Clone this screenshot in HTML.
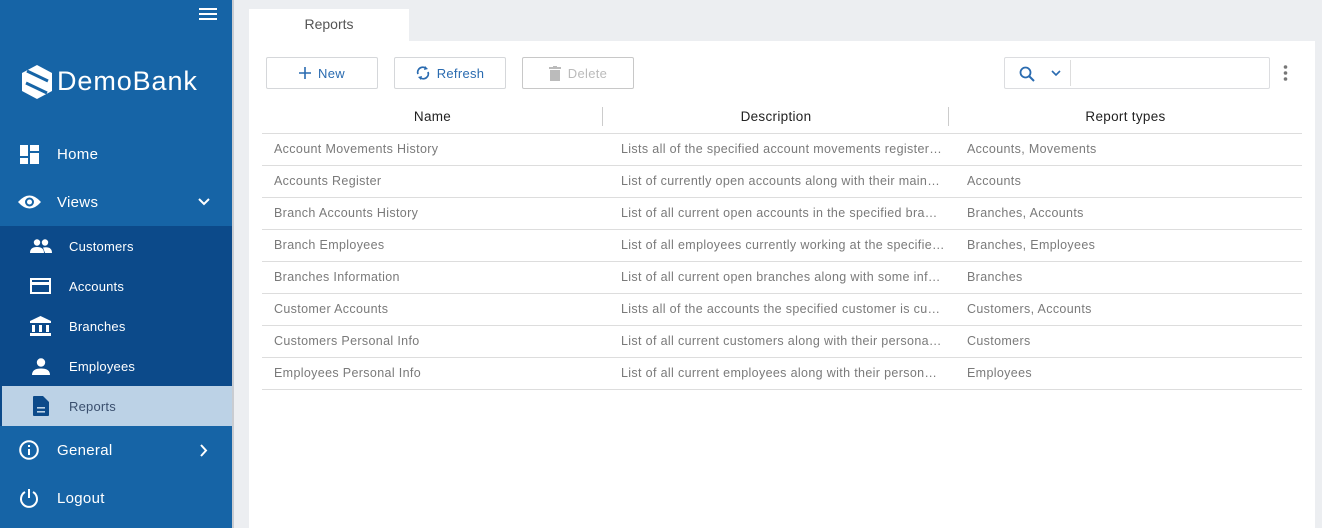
<!DOCTYPE html>
<html><head><meta charset="utf-8"><style>
*{box-sizing:border-box;margin:0;padding:0}
body{width:1322px;height:528px;overflow:hidden;background:#eceef1;font-family:"Liberation Sans",sans-serif;position:relative}
.sb{position:absolute;left:0;top:0;width:232px;height:528px;background:#1664a6;color:#fff}
.sbline{position:absolute;left:232px;top:0;width:2px;height:528px;background:#c9ccd1}
.it{position:absolute;left:0;width:232px;height:40px;display:flex;align-items:center;font-size:15px;letter-spacing:.3px}
.it svg{position:absolute}
.it span{position:absolute;left:57px}
.sub{position:absolute;left:0;top:226px;width:232px;height:200px;background:#0c4a8a}
.si{position:absolute;left:0;width:232px;height:40px;display:flex;align-items:center;font-size:13px;letter-spacing:.2px}
.si span{position:absolute;left:69px}
.si svg{position:absolute;left:30px}
.panel{position:absolute;left:249px;top:41px;width:1066px;height:487px;background:#fff}
.tab{position:absolute;left:249px;top:9px;width:160px;height:32px;background:#fff;font-size:14px;color:#555;text-align:center;line-height:31px}
.btn{position:absolute;top:57px;height:32px;width:112px;border:1px solid #d5d7da;border-radius:2px;font-size:13px;color:#2a6bb0;display:flex;align-items:center;justify-content:center;gap:7px;background:#fff;letter-spacing:.3px}
table{position:absolute;left:262px;top:100px;width:1040px;border-collapse:collapse;font-size:12.5px}
th{height:33px;font-weight:normal;color:#222;font-size:13.5px;text-align:center;position:relative;border-bottom:1px solid #ddd;letter-spacing:.3px}
td{height:32px;color:#7a7a7a;border-bottom:1px solid #ddd;padding-left:12px;white-space:nowrap;overflow:hidden;letter-spacing:.35px}
td:nth-child(2){padding-left:18px}td:nth-child(3){padding-left:18px}
.sep{position:absolute;top:7px;width:1px;height:19px;background:#ccc}
</style></head><body>
<div class="sb">
 <svg style="position:absolute;left:199px;top:8px" width="18" height="13"><rect y="0" width="18" height="2" fill="#fff"/><rect y="5" width="18" height="2" fill="#fff"/><rect y="10" width="18" height="2" fill="#fff"/></svg>
 <svg style="position:absolute;left:21px;top:64px" width="32" height="36" viewBox="0 0 32 36"><path d="M16 1 L31 9 L31 27 L16 35 L1 27 L1 9Z" fill="#fff"/><path d="M6 7 L27 17 M5 19 L26 29" stroke="#1664a6" stroke-width="3"/></svg>
 <div style="position:absolute;left:57px;top:66px;font-size:27px;letter-spacing:.9px">DemoBank</div>
 <div class="it" style="top:134px"><svg style="left:20px" width="19" height="19"><rect x="0" y="0" width="8" height="11" fill="#fff"/><rect x="10" y="0" width="9" height="6" fill="#fff"/><rect x="10" y="8" width="9" height="11" fill="#fff"/><rect x="0" y="13" width="8" height="6" fill="#fff"/></svg><span>Home</span></div>
 <div class="it" style="top:182px"><svg style="left:18px" width="23" height="16" viewBox="0 0 23 16"><path d="M0 8 Q11.5 -5 23 8 Q11.5 21 0 8Z" fill="#fff"/><circle cx="11.5" cy="8" r="4.5" fill="#1664a6"/><circle cx="11.5" cy="8" r="2.5" fill="#fff"/></svg><span>Views</span><svg style="left:198px" width="12" height="8"><path d="M1 1 L6 6 L11 1" stroke="#fff" stroke-width="2" fill="none"/></svg></div>
 <div class="sub">
  <div class="si" style="top:0"><svg width="22" height="14" viewBox="0 0 22 14"><circle cx="7" cy="3.5" r="3.2" fill="#fff"/><circle cx="15" cy="3.5" r="3.2" fill="#fff"/><path d="M0 14 Q0 8 7 8 Q14 8 14 14Z M13 8.5 Q22 7 22 14 H15Z" fill="#fff"/></svg><span>Customers</span></div>
  <div class="si" style="top:40px"><svg width="21" height="16"><rect x="1" y="1" width="19" height="14" fill="none" stroke="#fff" stroke-width="2"/><rect x="1" y="4" width="19" height="3" fill="#fff"/></svg><span>Accounts</span></div>
  <div class="si" style="top:80px"><svg width="21" height="20"><path d="M10.5 0 L21 5 V7 H0 V5Z" fill="#fff"/><rect x="2" y="9" width="3" height="7" fill="#fff"/><rect x="9" y="9" width="3" height="7" fill="#fff"/><rect x="16" y="9" width="3" height="7" fill="#fff"/><rect x="0" y="17" width="21" height="3" fill="#fff"/></svg><span>Branches</span></div>
  <div class="si" style="top:120px"><svg width="20" height="17" style="left:31px"><circle cx="10" cy="4.5" r="4.2" fill="#fff"/><path d="M1 17 Q1 10.5 10 10.5 Q19 10.5 19 17Z" fill="#fff"/></svg><span>Employees</span></div>
  <div class="si" style="top:160px;background:#bcd2e6;color:#3a4f6e;left:2px;width:230px"><svg width="16" height="20" style="left:31px"><path d="M0 1 Q0 0 1 0 H10 L16 6 V19 Q16 20 15 20 H1 Q0 20 0 19Z" fill="#0c4a8a"/><rect x="4" y="11" width="8" height="1.6" fill="#bcd2e6"/><rect x="4" y="15" width="8" height="1.6" fill="#bcd2e6"/></svg><span style="left:67px">Reports</span></div>
 </div>
 <div class="it" style="top:430px"><svg style="left:19px" width="20" height="20"><circle cx="10" cy="10" r="8.8" stroke="#fff" stroke-width="2" fill="none"/><rect x="9" y="9" width="2" height="6" fill="#fff"/><rect x="9" y="5" width="2" height="2" fill="#fff"/></svg><span>General</span><svg style="left:200px" width="8" height="13"><path d="M1 1 L6 6.5 L1 12" stroke="#fff" stroke-width="2" fill="none"/></svg></div>
 <div class="it" style="top:478px"><svg style="left:19px" width="20" height="20"><path d="M6 4 A8 8 0 1 0 14 4" stroke="#fff" stroke-width="2" fill="none"/><rect x="9" y="1" width="2" height="9" fill="#fff"/></svg><span>Logout</span></div>
</div>
<div class="sbline"></div>
<div class="tab">Reports</div>
<div class="panel"></div>
<div class="btn" style="left:266px"><svg width="12" height="12"><path d="M6 0V12M0 6H12" stroke="#2a6bb0" stroke-width="1.6"/></svg>New</div>
<div class="btn" style="left:394px"><svg width="14" height="16" viewBox="0 0 14 16"><path d="M2 9 A5 5 0 0 1 10 3.5 M12 7 A5 5 0 0 1 4 12.5" stroke="#2a6bb0" stroke-width="1.8" fill="none"/><path d="M9 1 L12 4 L8 5Z M5 15 L2 12 L6 11Z" fill="#2a6bb0"/></svg>Refresh</div>
<div class="btn" style="left:522px;color:#bbb;border-color:#c8c8c8"><svg width="12" height="15"><rect x="0" y="1" width="12" height="2" fill="#bbb"/><rect x="4" y="0" width="4" height="2" fill="#bbb"/><rect x="1" y="4" width="10" height="11" fill="#bbb"/></svg>Delete</div>
<div style="position:absolute;left:1004px;top:57px;width:266px;height:32px;border:1px solid #dcdde0;border-radius:2px;background:#fff"><div style="position:absolute;left:65px;top:2px;width:1px;height:26px;background:#ddd"></div>
<svg style="position:absolute;left:14px;top:8px" width="16" height="16"><circle cx="6.5" cy="6.5" r="5" stroke="#2a6bb0" stroke-width="1.8" fill="none"/><path d="M10 10 L15 15" stroke="#2a6bb0" stroke-width="2"/></svg>
<svg style="position:absolute;left:46px;top:12px" width="10" height="7"><path d="M1 1 L5 5 L9 1" stroke="#2a6bb0" stroke-width="1.6" fill="none"/></svg></div>
<svg style="position:absolute;left:1283px;top:65px" width="5" height="16"><circle cx="2.5" cy="2" r="1.8" fill="#777"/><circle cx="2.5" cy="8" r="1.8" fill="#777"/><circle cx="2.5" cy="14" r="1.8" fill="#777"/></svg>
<table>
<colgroup><col style="width:341px"><col style="width:346px"><col style="width:353px"></colgroup>
<tr><th>Name<div class="sep" style="right:0"></div></th><th>Description<div class="sep" style="right:0"></div></th><th>Report types</th></tr>
<tr><td>Account Movements History</td><td>Lists all of the specified account movements register…</td><td>Accounts, Movements</td></tr>
<tr><td>Accounts Register</td><td>List of currently open accounts along with their main…</td><td>Accounts</td></tr>
<tr><td>Branch Accounts History</td><td>List of all current open accounts in the specified bra…</td><td>Branches, Accounts</td></tr>
<tr><td>Branch Employees</td><td>List of all employees currently working at the specifie…</td><td>Branches, Employees</td></tr>
<tr><td>Branches Information</td><td>List of all current open branches along with some inf…</td><td>Branches</td></tr>
<tr><td>Customer Accounts</td><td>Lists all of the accounts the specified customer is cu…</td><td>Customers, Accounts</td></tr>
<tr><td>Customers Personal Info</td><td>List of all current customers along with their persona…</td><td>Customers</td></tr>
<tr><td>Employees Personal Info</td><td>List of all current employees along with their person…</td><td>Employees</td></tr>
</table>
</body></html>
